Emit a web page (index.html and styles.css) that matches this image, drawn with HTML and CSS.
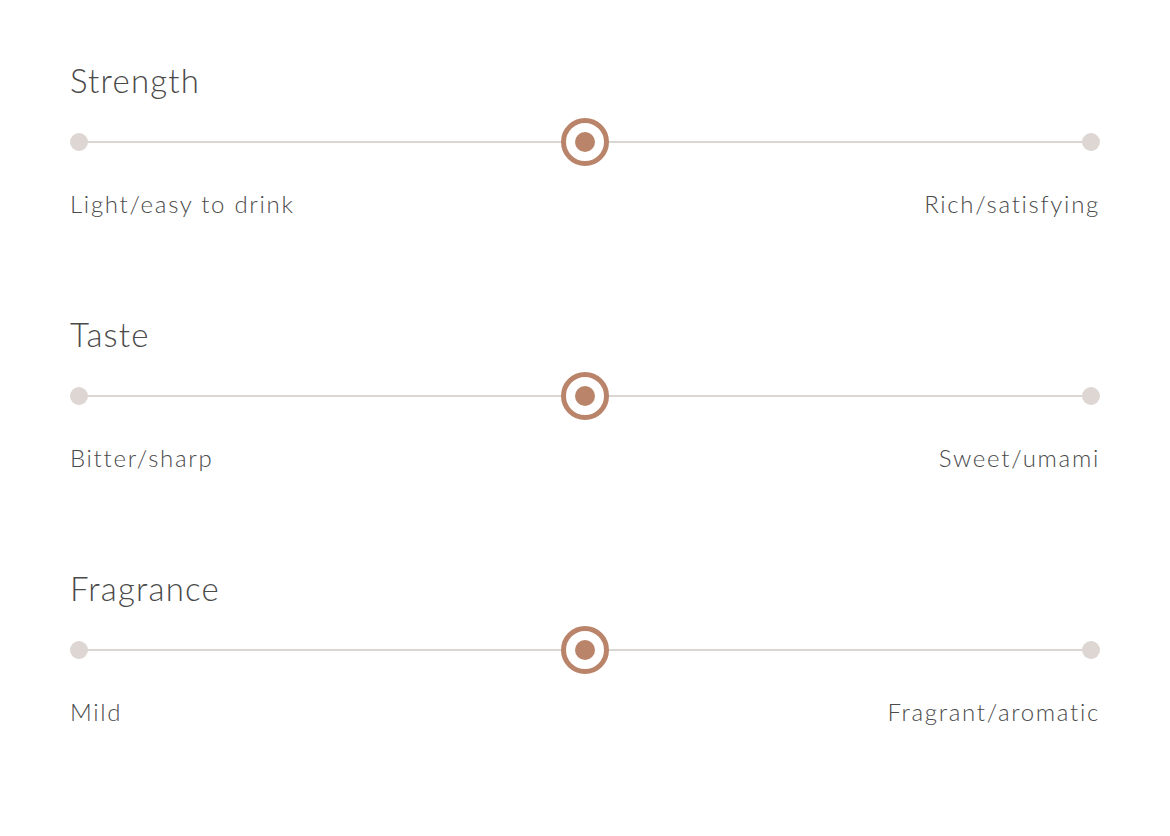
FILE: index.html
```html
<!DOCTYPE html>
<html lang="en">
<head>
<meta charset="utf-8">
<title>Tea profile</title>
<link rel="stylesheet" href="styles.css">
</head>
<body>
<main class="profile">
  <section class="attr">
    <h2 class="attr-title">Strength</h2>
    <div class="slider">
      <span class="end"></span>
      <span class="track"></span>
      <span class="knob"><span class="knob-dot"></span></span>
      <span class="end"></span>
    </div>
    <div class="labels"><span>Light/easy to drink</span><span>Rich/satisfying</span></div>
  </section>
  <section class="attr">
    <h2 class="attr-title">Taste</h2>
    <div class="slider">
      <span class="end"></span>
      <span class="track"></span>
      <span class="knob"><span class="knob-dot"></span></span>
      <span class="end"></span>
    </div>
    <div class="labels"><span>Bitter/sharp</span><span>Sweet/umami</span></div>
  </section>
  <section class="attr">
    <h2 class="attr-title">Fragrance</h2>
    <div class="slider">
      <span class="end"></span>
      <span class="track"></span>
      <span class="knob"><span class="knob-dot"></span></span>
      <span class="end"></span>
    </div>
    <div class="labels"><span>Mild</span><span>Fragrant/aromatic</span></div>
  </section>
</main>
</body>
</html>
```
FILE: styles.css
```css
html, body {
  margin: 0;
  padding: 0;
  background: #ffffff;
}
body {
  font-family: "Lato", "Liberation Sans", sans-serif;
  color: #4a4a4a;
}
.profile {
  width: 1030px;
  padding: 60px 70px 0 70px;
  display: flex;
  flex-direction: column;
  gap: 95px;
}
.attr {
  display: flex;
  flex-direction: column;
}
.attr-title {
  margin: 0;
  font-size: 33px;
  font-weight: 300;
  line-height: 40px;
  height: 40px;
  letter-spacing: 1.2px;
}
.slider {
  margin-top: 16px;
  height: 52px;
  display: flex;
  align-items: center;
  position: relative;
}
.end {
  width: 18px;
  height: 18px;
  border-radius: 50%;
  background: #ddd6d2;
  flex: none;
}
.track {
  flex: 1;
  height: 2px;
  background: #dcd6d3;
  margin: 0 -9px;
}
.knob {
  position: absolute;
  left: 50%;
  top: 50%;
  width: 38px;
  height: 38px;
  margin: -24px 0 0 -24px;
  border: 5px solid #b9846a;
  border-radius: 50%;
  background: #ffffff;
  display: flex;
  align-items: center;
  justify-content: center;
}
.knob-dot {
  width: 20px;
  height: 20px;
  border-radius: 50%;
  background: #b9846a;
}
.labels {
  margin-top: 21px;
  height: 30px;
  line-height: 30px;
  display: flex;
  justify-content: space-between;
  font-size: 24px;
  font-weight: 300;
  letter-spacing: 1.7px;
}
```
